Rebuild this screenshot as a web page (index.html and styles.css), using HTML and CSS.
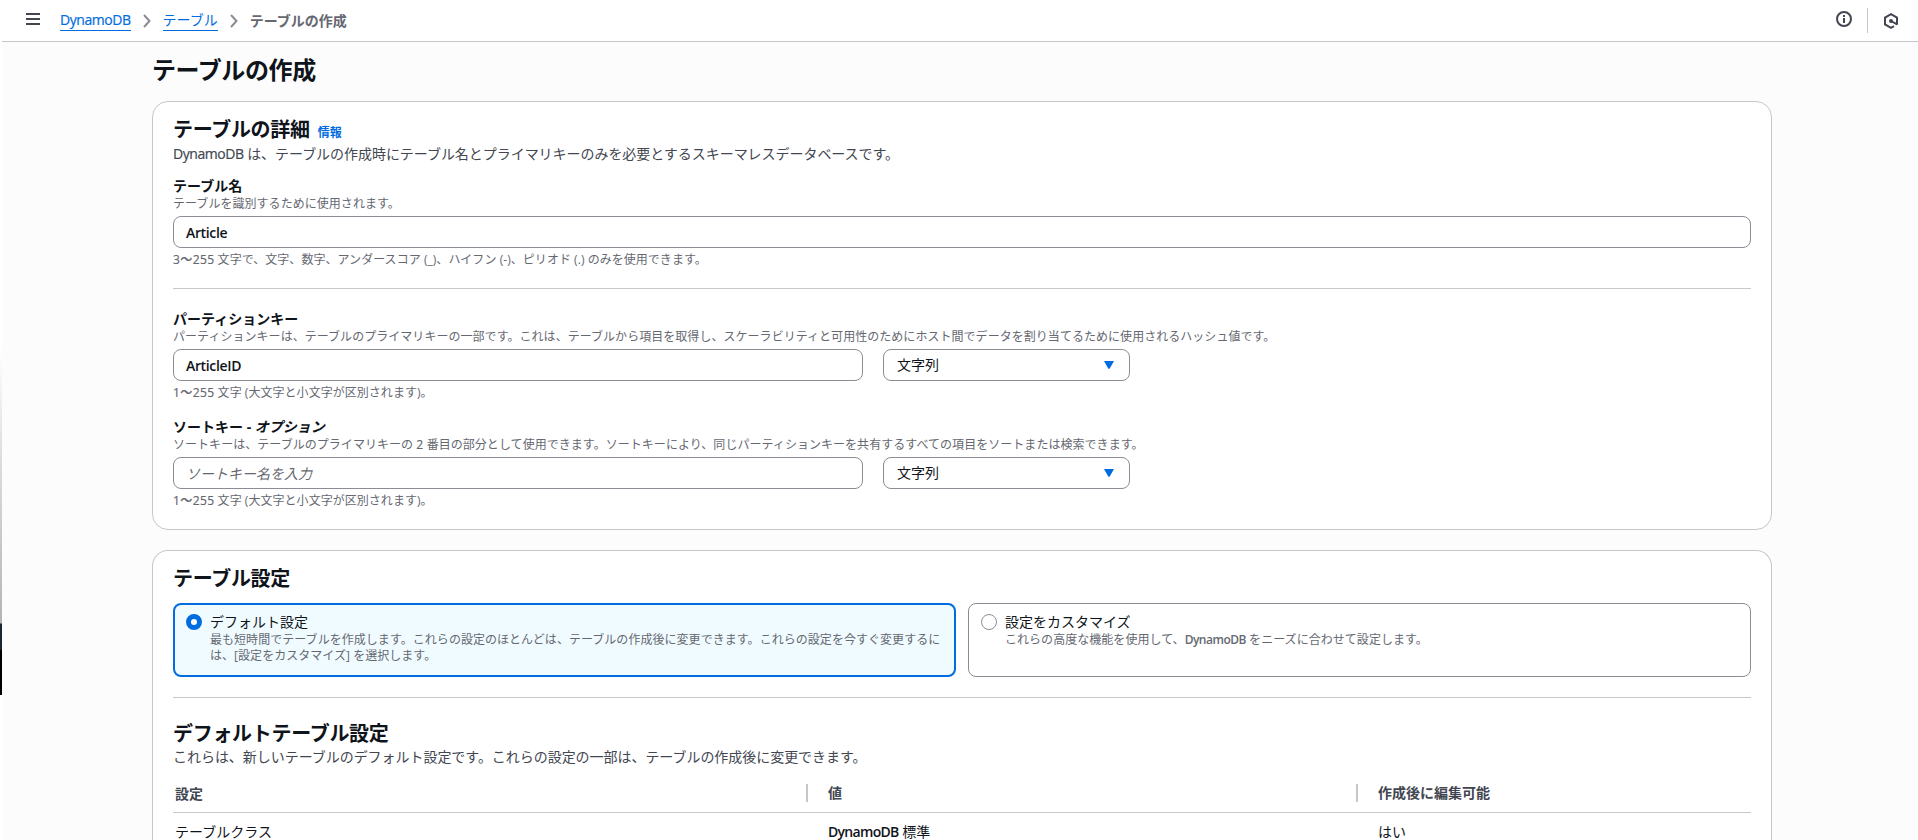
FILE: index.html
```html
<!DOCTYPE html>
<html lang="ja">
<head>
<meta charset="utf-8">
<title>テーブルの作成</title>
<link rel="stylesheet" href="styles.css">
</head>
<body>
<div class="edge"></div>
<header class="topbar">
  <svg class="menu" width="16" height="16" viewBox="0 0 16 16"><path d="M1 3h14M1 8h14M1 13h14"/></svg>
  <nav class="crumbs">
    <a><span class="medium">DynamoDB</span></a>
    <svg class="chev" width="8" height="14" viewBox="0 0 8 14"><path d="M1 1l5.5 6L1 13"/></svg>
    <a>テーブル</a>
    <svg class="chev" width="8" height="14" viewBox="0 0 8 14"><path d="M1 1l5.5 6L1 13"/></svg>
    <span class="current">テーブルの作成</span>
  </nav>
  <div class="tools">
    <svg class="info-icon" width="16" height="16" viewBox="0 0 16 16"><circle cx="8" cy="8" r="7"/><path d="M8 7v5M8 4v2"/></svg>
    <span class="sep"></span>
    <svg class="hex" width="16" height="16" viewBox="0 0 16 16"><path d="M14 11.8V4.6L8 1.2 2 4.6v6.8l6 3.4 3-1.7"/><path d="M8 8l6 3.4"/><circle cx="8" cy="8" r="2"/></svg>
  </div>
</header>
<main class="page">
  <h1>テーブルの作成</h1>
  <section class="card details">
    <div class="heading"><h2>テーブルの詳細</h2><a class="info">情報</a></div>
    <p class="desc"><span class="medium">DynamoDB</span> は、テーブルの作成時にテーブル名とプライマリキーのみを必要とするスキーマレスデータベースです。</p>
    <div class="field first">
      <label>テーブル名</label>
      <p class="hint">テーブルを識別するために使用されます。</p>
      <div class="input">Article</div>
      <p class="constraint"><span class="num">3～255</span> 文字で、文字、数字、アンダースコア (_)、ハイフン (-)、ピリオド (.) のみを使用できます。</p>
    </div>
    <hr>
    <div class="field second">
      <label>パーティションキー</label>
      <p class="hint">パーティションキーは、テーブルのプライマリキーの一部です。これは、テーブルから項目を取得し、スケーラビリティと可用性のためにホスト間でデータを割り当てるために使用されるハッシュ値です。</p>
      <div class="row">
        <div class="input">ArticleID</div>
        <div class="input select"><span>文字列</span><svg width="10" height="8" viewBox="0 0 10 8"><path d="M0 0h10L5.6 7.8h-1.2z"/></svg></div>
      </div>
      <p class="constraint"><span class="num">1～255</span> 文字 (大文字と小文字が区別されます)。</p>
    </div>
    <div class="field third">
      <label>ソートキー - <i>オプション</i></label>
      <p class="hint">ソートキーは、テーブルのプライマリキーの <span class="num">2</span> 番目の部分として使用できます。ソートキーにより、同じパーティションキーを共有するすべての項目をソートまたは検索できます。</p>
      <div class="row">
        <div class="input placeholder">ソートキー名を入力</div>
        <div class="input select"><span>文字列</span><svg width="10" height="8" viewBox="0 0 10 8"><path d="M0 0h10L5.6 7.8h-1.2z"/></svg></div>
      </div>
      <p class="constraint"><span class="num">1～255</span> 文字 (大文字と小文字が区別されます)。</p>
    </div>
  </section>
  <section class="card settings">
    <h2>テーブル設定</h2>
    <div class="tiles">
      <div class="tile selected">
        <span class="radio"></span>
        <div><div class="tile-label">デフォルト設定</div><p class="tile-desc">最も短時間でテーブルを作成します。これらの設定のほとんどは、テーブルの作成後に変更できます。これらの設定を今すぐ変更するに<br>は、[設定をカスタマイズ] を選択します。</p></div>
      </div>
      <div class="tile">
        <span class="radio"></span>
        <div><div class="tile-label">設定をカスタマイズ</div><p class="tile-desc">これらの高度な機能を使用して、<span class="latin-small">DynamoDB</span> をニーズに合わせて設定します。</p></div>
      </div>
    </div>
    <hr>
    <h2 class="defaults">デフォルトテーブル設定</h2>
    <p class="desc">これらは、新しいテーブルのデフォルト設定です。これらの設定の一部は、テーブルの作成後に変更できます。</p>
    <div class="table">
      <div class="tr th"><div>設定</div><div>値</div><div>作成後に編集可能</div></div>
      <div class="tr"><div>テーブルクラス</div><div><span class="latin">DynamoDB</span> 標準</div><div>はい</div></div>
    </div>
  </section>
</main>
</body>
</html>
```
FILE: styles.css
```css
* { box-sizing: border-box; }
html, body { height: 840px; overflow: hidden; }
body {
  margin: 0;
  background: #fcfcfd;
  color: #0f141a;
  font: 14px/20px "Open Sans", "Noto Sans CJK JP", sans-serif;
}
h1, h2, p { margin: 0; white-space: nowrap; }
hr { border: 0; height: 1px; background: #c6c6cd; margin: 0; }
svg { display: block; fill: none; flex: none; }

.latin { font-weight: 600; letter-spacing: -0.7px; }
.medium { font-weight: 500; letter-spacing: -0.45px; -webkit-text-stroke: 0.2px; }
.latin-small { font-weight: 600; letter-spacing: -0.5px; }
.num { font-weight: 500; letter-spacing: 0.4px; -webkit-text-stroke: 0.2px; }

.edge {
  position: absolute;
  left: 0; top: 0;
  width: 2px; height: 840px;
  background: linear-gradient(#fff 350px, #dcdcdc 460px, #b4b4b4 623px, #1a2433 624px, #1a2433 650px, #000 650px, #000 695px, #fff 695px);
}

.topbar {
  display: flex;
  align-items: center;
  height: 42px;
  margin-left: 2px;
  padding: 0 19px 0 23px;
  background: #fff;
  border-bottom: 1px solid #c6c6cd;
}
.menu { stroke: #424650; stroke-width: 2; margin-bottom: 3px; }
.crumbs { display: flex; align-items: center; margin-left: 19px; }
.crumbs a { color: #006ce0; border-bottom: 1px solid #006ce0; line-height: 19px; height: 21px; font-weight: 400; }
.chev { stroke: #8c8c94; stroke-width: 2; margin: 0 12px; }
.current { color: #656871; font-weight: 700; }
.tools { display: flex; align-items: center; margin-left: auto; }
.tools svg { stroke: #424650; stroke-width: 2; }
.info-icon { margin-bottom: 3px; }
.sep { width: 1px; height: 25px; background: #c6c6cd; margin: 0 15px; }
.hex circle { fill: #424650; stroke: none; }

.page { width: 1620px; margin-left: 152px; }
h1 { font-size: 24px; line-height: 30px; letter-spacing: -0.4px; padding-top: 13px; height: 59px; }
h2 { font-size: 20px; line-height: 24px; letter-spacing: -0.3px; font-weight: 700; }
.card { background: #fff; border: 1px solid #c6c6cd; border-radius: 16px; padding: 0 20px; }
.details { height: 429px; padding-top: 16px; }
.settings { height: 290px; margin-top: 20px; padding-top: 16px; border-bottom: 0; border-radius: 16px 16px 0 0; }
.heading { display: flex; align-items: baseline; gap: 8px; height: 24px; }
.info { color: #006ce0; font-size: 12px; font-weight: 700; line-height: 16px; }
.desc { color: #424650; margin-top: 2px; letter-spacing: -0.04px; }

label { display: block; font-weight: 700; height: 20px; }
.hint, .constraint, .tile-desc { font-size: 12px; line-height: 16px; color: #656871; letter-spacing: 0.04px; }
.hint { margin-bottom: 4px; }
.constraint { margin-top: 4px; }
.first { margin-top: 12px; }
.details hr { margin-top: 20px; }
.second { margin-top: 20px; }
.third { margin-top: 16px; }
.input {
  height: 32px;
  border: 1px solid #8c8c94;
  border-radius: 8px;
  padding: 6px 12px 4px;
  background: #fff;
  font-weight: 600;
  letter-spacing: -0.35px;
}
.row { display: grid; grid-template-columns: 690px 247px; gap: 20px; }
.select { display: flex; align-items: center; justify-content: space-between; padding: 0 15px 1px 13px; font-weight: 400; letter-spacing: 0; }
.select svg { fill: #006ce0; }
.placeholder { color: #656871; font-style: italic; font-weight: 400; letter-spacing: 0; }

.tiles { display: grid; grid-template-columns: 1fr 1fr; gap: 12px; margin-top: 12px; }
.tile { display: flex; gap: 8px; height: 74px; border: 1px solid #8c8c94; border-radius: 8px; padding: 8px 12px; }
.selected { border: 2px solid #006ce0; background: #f0fbff; padding: 7px 11px; }
.radio { flex: none; width: 16px; height: 16px; border: 1px solid #8c8c94; border-radius: 50%; margin-top: 2px; }
.selected .radio { border: 5px solid #006ce0; background: #fff; }
.tile-label { height: 20px; line-height: 19px; }
.settings hr { margin-top: 20px; }
.defaults { margin-top: 24px; }
.settings .desc { margin-top: 1px; }
.table { margin-top: 17px; }
.tr { display: grid; grid-template-columns: 635px 550px 1fr; padding-top: 9px; }
.tr div { padding-left: 20px; height: 20px; }
.tr div:first-child { padding-left: 2px; }
.th { height: 29px; padding-top: 0; border-bottom: 1px solid #c6c6cd; color: #424650; font-weight: 700; }
.th div + div { border-left: 2px solid #c6c6cd; height: 18px; line-height: 18px; margin-left: -2px; }
```
